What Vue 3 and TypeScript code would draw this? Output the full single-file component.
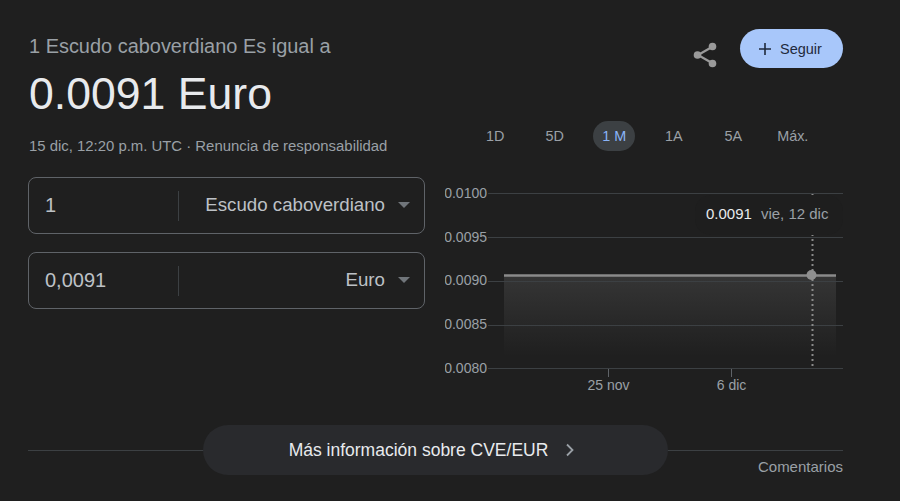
<template>
  <div class="page">
    <div class="main">
      <section class="left">
        <div class="from-line">1 Escudo caboverdiano Es igual a</div>
        <div class="result">0.0091 Euro</div>
        <div class="stamp">15 dic, 12:20 p.m. UTC · Renuncia de responsabilidad</div>

        <div class="converters">
          <div v-for="row in converters" :key="row.currency" class="converter">
            <span class="amount">{{ row.amount }}</span>
            <span class="divider"></span>
            <span class="currency">{{ row.currency }}</span>
            <span class="caret"></span>
          </div>
        </div>
      </section>

      <section class="right">
        <div class="actions">
          <svg class="share" width="24" height="26" viewBox="0 0 24 26">
            <path d="M19 5 L5 13 L19 21" fill="none" stroke="#9a9a9a" stroke-width="2.2" />
            <circle cx="19.500" cy="4.500" r="3.800" fill="#9a9a9a" />
            <circle cx="4.500" cy="13" r="3.800" fill="#9a9a9a" />
            <circle cx="19.500" cy="21.500" r="3.800" fill="#9a9a9a" />
          </svg>
          <button class="follow">
            <svg width="12" height="12" viewBox="0 0 12 12">
              <path d="M6 0 V12 M0 6 H12" stroke="#1f2a3c" stroke-width="1.6" />
            </svg>
            Seguir
          </button>
        </div>

        <div class="ranges">
          <span
            v-for="r in ranges"
            :key="r"
            class="range"
            :class="{ 'range-active': r === activeRange }"
          >
            <span class="range-label">{{ r }}</span>
          </span>
        </div>

        <div class="chart">
          <svg width="398" height="220" viewBox="445 180 398 220">
            <defs>
              <linearGradient id="area" x1="0" y1="0" x2="0" y2="1">
                <stop offset="0" stop-color="#353535" />
                <stop offset="1" stop-color="#1f1f1f" />
              </linearGradient>
            </defs>
            <rect x="504" y="276" width="332" height="80" fill="url(#area)" />
            <g v-for="g in gridLines" :key="g.label">
              <line x1="488" x2="843" :y1="g.y" :y2="g.y" class="grid" />
              <text x="487" :y="g.labelY" text-anchor="end" class="axis">{{ g.label }}</text>
            </g>
            <g v-for="t in ticks" :key="t.label">
              <line :x1="t.x" :x2="t.x" y1="369" y2="377" class="tick" />
              <text :x="t.x" y="390" text-anchor="middle" class="axis">{{ t.label }}</text>
            </g>
            <line x1="504" x2="836" y1="275.500" y2="275.500" stroke="#8a8a8a" stroke-width="2.500" />
            <line x1="812.500" x2="812.500" y1="194" y2="367" stroke="#8a8a8a" stroke-width="2" stroke-dasharray="2 3" />
            <circle cx="811.500" cy="275" r="5" fill="#8f8f8f" />
          </svg>
          <div class="tip">
            <span class="tip-value">0.0091</span>
            <span class="tip-date">vie, 12 dic</span>
          </div>
        </div>
      </section>
    </div>

    <footer class="footer">
      <span class="rule"></span>
      <button class="more">
        Más información sobre CVE/EUR
        <svg width="10" height="14" viewBox="0 0 10 14">
          <path d="M2 1.500 L7.500 7 L2 12.500" fill="none" stroke="#9aa0a6" stroke-width="1.800" />
        </svg>
      </button>
      <span class="feedback">Comentarios</span>
    </footer>
  </div>
</template>

<script setup lang="ts">
interface IConverter {
  amount: string;
  currency: string;
}

const converters: IConverter[] = [
  { amount: '1', currency: 'Escudo caboverdiano' },
  { amount: '0,0091', currency: 'Euro' },
];

const ranges = ['1D', '5D', '1 M', '1A', '5A', 'Máx.'];
const activeRange = '1 M';

const gridLines = [
  { y: 193.5, labelY: 198, label: '0.0100' },
  { y: 237.5, labelY: 242, label: '0.0095' },
  { y: 281.5, labelY: 285, label: '0.0090' },
  { y: 325.5, labelY: 329, label: '0.0085' },
  { y: 368.5, labelY: 373, label: '0.0080' },
];

const ticks = [
  { x: 608.5, label: '25 nov' },
  { x: 731.5, label: '6 dic' },
];
</script>

<style>
html,
body {
  background: #1f1f1f;
}
</style>

<style scoped>
.page {
  width: 900px;
  height: 501px;
  box-sizing: border-box;
  padding: 29px 57px 0 28px;
  background: #1f1f1f;
  font-family: 'Liberation Sans', Arial, sans-serif;
  overflow: hidden;
}

.main {
  display: flex;
  gap: 20px;
}

.left {
  width: 397px;
}

.from-line {
  margin-top: 5px;
  padding-left: 1px;
  font-size: 19.950px;
  line-height: 24px;
  color: #9aa0a6;
}

.result {
  margin-top: 10px;
  padding-left: 1px;
  font-size: 44.600px;
  line-height: 52px;
  color: #e8eaed;
}

.stamp {
  margin-top: 16px;
  padding-left: 1px;
  font-size: 14.900px;
  line-height: 20px;
  color: #9aa0a6;
}

.converters {
  display: flex;
  flex-direction: column;
  gap: 18px;
  margin-top: 21px;
}

.converter {
  display: flex;
  align-items: center;
  height: 57px;
  box-sizing: border-box;
  padding: 0 13px 0 16px;
  border: 1px solid #5f6368;
  border-radius: 8px;
}

.amount {
  width: 133px;
  font-size: 20px;
  color: #bdc1c6;
}

.divider {
  width: 1px;
  height: 30px;
  background: #3c4043;
}

.currency {
  flex: 1;
  margin-bottom: 2px;
  text-align: right;
  font-size: 18.700px;
  color: #bdc1c6;
}

.caret {
  width: 0;
  height: 0;
  margin-left: 13px;
  margin-right: 1px;
  margin-bottom: 1px;
  border-left: 6.500px solid transparent;
  border-right: 6.500px solid transparent;
  border-top: 6px solid #70757a;
}

.right {
  width: 398px;
}

.actions {
  display: flex;
  justify-content: flex-end;
  align-items: center;
  gap: 23px;
  height: 39px;
}

.share {
  margin-top: 12px;
}

.follow {
  display: flex;
  align-items: center;
  gap: 9px;
  width: 103px;
  height: 39px;
  padding: 0 0 0 19px;
  border: 0;
  border-radius: 20px;
  background: #a8c7fa;
  color: #1f2a3c;
  font: 14.500px 'Liberation Sans', Arial, sans-serif;
}

.ranges {
  display: flex;
  margin-top: 53px;
  margin-left: 20.500px;
}

.range {
  display: flex;
  justify-content: center;
  width: 59.500px;
  font-size: 14.400px;
  line-height: 30px;
  color: #9aa0a6;
}

.range-label {
  padding: 0 9px;
  border-radius: 15px;
}

.range-active {
  color: #8ab4f8;
}

.range-active .range-label {
  background: #3c4043;
}

.chart {
  position: relative;
  margin-top: 29px;
  height: 220px;
}

.chart svg {
  display: block;
}

.grid {
  stroke: #3c4043;
  stroke-width: 1;
}

.tick {
  stroke: #5f6368;
  stroke-width: 1;
}

.axis {
  font-size: 14px;
  fill: #9aa0a6;
}

.tip {
  position: absolute;
  top: 15px;
  left: 250px;
  right: 0;
  display: flex;
  align-items: center;
  gap: 9px;
  height: 40px;
  padding: 0 11px 3px;
  box-sizing: border-box;
  border-radius: 16px;
  background: #1e1e1e;
  font-size: 15px;
  white-space: nowrap;
}

.tip-value {
  color: #e8eaed;
}

.tip-date {
  color: #9aa0a6;
}

.footer {
  position: relative;
  display: flex;
  justify-content: flex-end;
  height: 50px;
  margin-top: 25px;
}

.rule {
  position: absolute;
  left: 0;
  right: 0;
  top: 25px;
  height: 1px;
  background: #3c4043;
}

.more {
  position: absolute;
  left: 175px;
  top: 0;
  display: flex;
  align-items: center;
  justify-content: center;
  gap: 17px;
  width: 465px;
  height: 50px;
  padding: 0 7px 0 0;
  border: 0;
  border-radius: 25px;
  background: #292a2d;
  color: #e8eaed;
  font: 17.500px 'Liberation Sans', Arial, sans-serif;
}

.feedback {
  align-self: flex-end;
  font-size: 15px;
  line-height: 16px;
  color: #9aa0a6;
}
</style>
